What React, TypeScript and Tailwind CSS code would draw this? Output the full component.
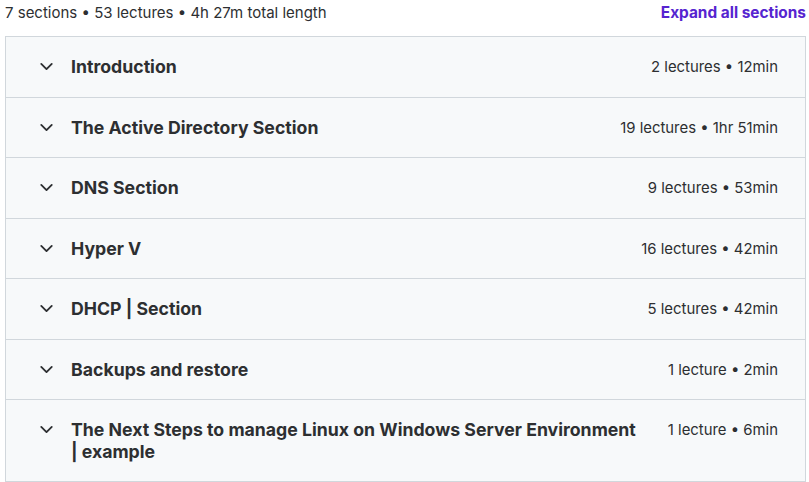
import { ChevronDown } from "lucide-react";

// 커리큘럼 섹션 목록
const sections = [
  { title: "Introduction", meta: "2 lectures • 12min" },
  { title: "The Active Directory Section", meta: "19 lectures • 1hr 51min" },
  { title: "DNS Section", meta: "9 lectures • 53min" },
  { title: "Hyper V", meta: "16 lectures • 42min" },
  { title: "DHCP | Section", meta: "5 lectures • 42min" },
  { title: "Backups and restore", meta: "1 lecture • 2min" },
  {
    title: "The Next Steps to manage Linux on Windows Server Environment | example",
    meta: "1 lecture • 6min",
  },
];

export default function App() {
  return (
    <div className="w-[809px] h-[482px] bg-white text-[#2d2f31] pl-[5px] pr-[3px] pt-[3px] font-['Inter','Noto_Sans',sans-serif] overflow-hidden">
      {/* 상단 요약 줄 */}
      <div className="flex items-center justify-between h-[20px] leading-[20px]">
        <span className="text-[15px]">7 sections • 53 lectures • 4h 27m total length</span>
        <button className="text-[15.4px] font-bold text-[#5624d0]">Expand all sections</button>
      </div>

      {/* 섹션 아코디언 */}
      <div className="mt-[13px] border border-[#d1d7dc] border-b-0 bg-[#f7f9fa]">
        {sections.map((s) => (
          <div
            key={s.title}
            className="flex items-start border-b border-[#d1d7dc] pl-[28px] pr-[27px] py-[19px]"
          >
            <div className="w-[24px] h-[21.5px] flex items-center justify-center shrink-0">
              <ChevronDown size={21} strokeWidth={2.1} />
            </div>
            <div className="ml-[13px] flex-1 text-[17.7px] font-bold leading-[21.5px]">{s.title}</div>
            <div className="ml-[28px] mt-[1px] text-[14.9px] leading-[20.5px] whitespace-nowrap">{s.meta}</div>
          </div>
        ))}
      </div>
    </div>
  );
}
